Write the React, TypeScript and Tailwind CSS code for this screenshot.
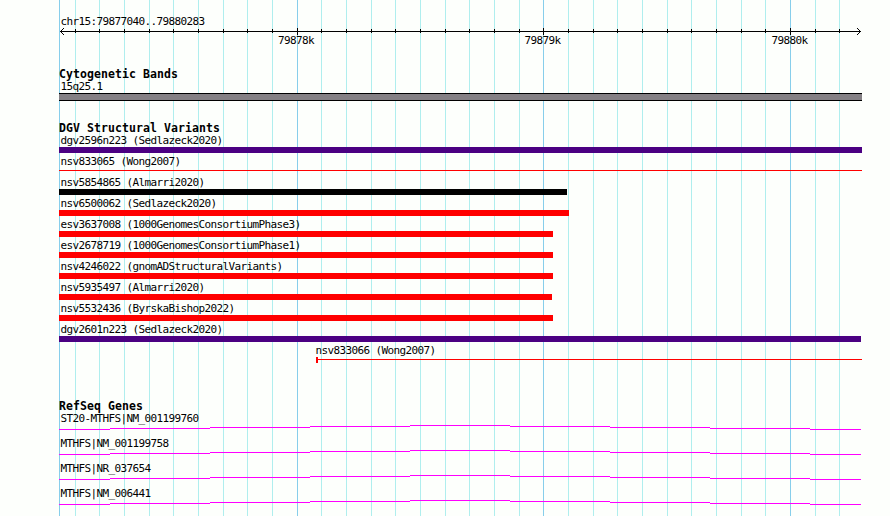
import React from 'react';

interface Variant {
  name: string;
  start: number;
  end: number;
  kind: 'gain' | 'loss' | 'complex' | 'range' | 'partial';
}

const LEFT = 59;
const MAJOR = [297, 543, 790];
const MINOR = [
  75, 99, 124, 149, 173, 198, 223, 247, 272, 321, 346, 371, 395, 420, 445, 469, 494, 519,
  568, 593, 617, 642, 667, 691, 716, 741, 765, 815, 839,
];

const TICK_LABELS = [
  { x: 278, text: '79878k' },
  { x: 524.5, text: '79879k' },
  { x: 771.5, text: '79880k' },
];

const VARIANTS: Variant[] = [
  { name: 'dgv2596n223 (Sedlazeck2020)', start: 59, end: 862, kind: 'complex' },
  { name: 'nsv833065 (Wong2007)', start: 59, end: 862, kind: 'range' },
  { name: 'nsv5854865 (Almarri2020)', start: 59, end: 567, kind: 'gain' },
  { name: 'nsv6500062 (Sedlazeck2020)', start: 59, end: 569, kind: 'loss' },
  { name: 'esv3637008 (1000GenomesConsortiumPhase3)', start: 59, end: 553, kind: 'loss' },
  { name: 'esv2678719 (1000GenomesConsortiumPhase1)', start: 59, end: 553, kind: 'loss' },
  { name: 'nsv4246022 (gnomADStructuralVariants)', start: 59, end: 553, kind: 'loss' },
  { name: 'nsv5935497 (Almarri2020)', start: 59, end: 552, kind: 'loss' },
  { name: 'nsv5532436 (ByrskaBishop2022)', start: 59, end: 553, kind: 'loss' },
  { name: 'dgv2601n223 (Sedlazeck2020)', start: 59, end: 861, kind: 'complex' },
  { name: 'nsv833066 (Wong2007)', start: 314, end: 862, kind: 'partial' },
];

const GENES = ['ST20-MTHFS|NM_001199760', 'MTHFS|NM_001199758', 'MTHFS|NR_037654', 'MTHFS|NM_006441'];

const BAR_COLORS = {
  gain: 'bg-black',
  loss: 'bg-[#ff0000]',
  complex: 'bg-[#4b0082]',
};

const GridLines: React.FC = () => (
  <svg className="absolute inset-0" width="890" height="516" shapeRendering="crispEdges">
    {MINOR.map((x) => (
      <rect key={x} x={x} y="0" width="1" height="516" fill="#afeeee" />
    ))}
    {[LEFT, ...MAJOR].map((x) => (
      <rect key={x} x={x} y="0" width="1" height="516" fill="#87ceeb" />
    ))}
  </svg>
);

const Ruler: React.FC = () => (
  <svg className="block overflow-visible" width="803" height="19" viewBox="59 28 803 19">
    <g shapeRendering="crispEdges">
      <rect x="60" y="31" width="801" height="1" />
      {MINOR.map((x) => (
        <rect key={x} x={x} y="29" width="1" height="4" />
      ))}
      {MAJOR.map((x) => (
        <rect key={x} x={x} y="28" width="1" height="7" />
      ))}
      {[0, 1, 2, 3].map((i) => (
        <g key={i}>
          <rect x={60 + i} y={31 - i} width="1" height="1" />
          <rect x={60 + i} y={31 + i} width="1" height="1" />
          <rect x={860 - i} y={31 - i} width="1" height="1" />
          <rect x={860 - i} y={31 + i} width="1" height="1" />
        </g>
      ))}
    </g>
    {TICK_LABELS.map((t) => (
      <text key={t.text} x={t.x} y="44">
        {t.text}
      </text>
    ))}
  </svg>
);

const TrackTitle: React.FC<{ children: string }> = ({ children }) => (
  <h2 className="h-3 text-[11.5px] font-bold tracking-[0.077px]">{children}</h2>
);

const Label: React.FC<{ children: string }> = ({ children }) => (
  <div className="h-[13px] pl-[1.4px]">{children}</div>
);

const VariantRow: React.FC<{ variant: Variant }> = ({ variant }) => {
  const { name, start, end, kind } = variant;

  return (
    <div className="h-[21px]" style={{ marginLeft: start - LEFT, width: end - start }}>
      <Label>{name}</Label>
      {kind === 'range' && <div className="mt-[2px] h-px bg-[#ff0000]" />}
      {kind === 'partial' && (
        <div className="flex h-[6px] pl-[2px]">
          <div className="w-[2px] bg-[#ff0000]" />
          <div className="mt-[2px] h-px flex-1 bg-[#ff0000]" />
        </div>
      )}
      {(kind === 'gain' || kind === 'loss' || kind === 'complex') && (
        <div className={`h-[6px] ${BAR_COLORS[kind]}`} />
      )}
    </div>
  );
};

// Intron hat, one pixel step every 100px
const GeneLine: React.FC = () => (
  <svg className="block" width="802" height="5" viewBox="59 0 802 5" shapeRendering="crispEdges">
    {[4, 3, 2, 1, 0, 1, 2, 3, 4].map((y, i) => {
      const x = i === 0 ? 59 : 10 + i * 100;
      const end = i === 8 ? 861 : 110 + i * 100;
      return <rect key={i} x={x} y={y} width={end - x} height="1" fill="#ff00ff" />;
    })}
  </svg>
);

const App: React.FC = () => {
  return (
    <div className="relative h-[516px] w-[890px] overflow-hidden bg-[#fdfffc]">
      <GridLines />
      <main className="relative ml-[59px] w-[803px] whitespace-pre pt-[15px] font-['DejaVu_Sans_Mono',monospace] text-[11px] leading-[13px] tracking-[-0.622px] text-black">
        <Label>chr15:79877040..79880283</Label>
        <Ruler />

        <section className="mt-[21px]">
          <TrackTitle>Cytogenetic Bands</TrackTitle>
          <Label>15q25.1</Label>
          <div className="h-2 border-y border-black bg-[#848084]" />
        </section>

        <section className="mt-[21px]">
          <TrackTitle>DGV Structural Variants</TrackTitle>
          {VARIANTS.map((v) => (
            <VariantRow key={v.name} variant={v} />
          ))}
        </section>

        <section className="mt-[35px]">
          <TrackTitle>RefSeq Genes</TrackTitle>
          {GENES.map((gene) => (
            <div key={gene} className="h-[25px]">
              <Label>{gene}</Label>
              <GeneLine />
            </div>
          ))}
        </section>
      </main>
    </div>
  );
};

export default App;
